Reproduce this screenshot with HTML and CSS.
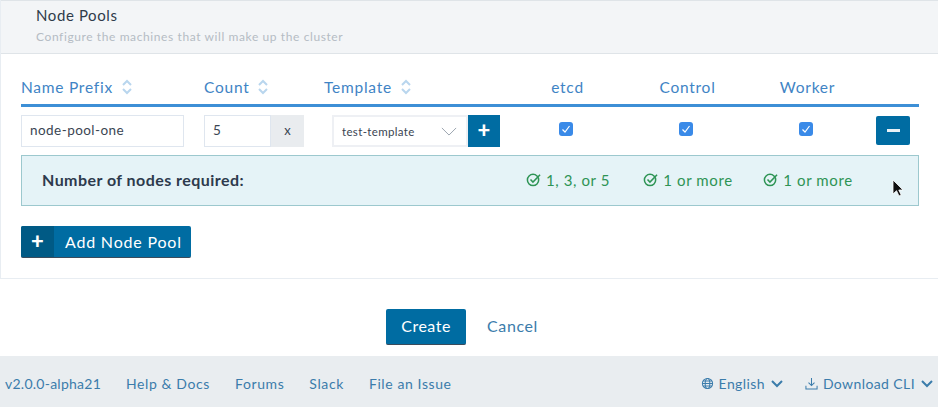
FILE: index.html
```html
<!DOCTYPE html>
<html lang="en">
<head>
    <meta charset="UTF-8">
    <meta name="viewport" content="width=device-width, initial-scale=1.0">
    <title>Node Pools</title>
    <link rel="stylesheet" href="styles.css">
</head>
<body>
    <div class="page">
        <section class="panel">
            <div class="panel-head">
                <h2>Node Pools</h2>
                <p>Configure the machines that will make up the cluster</p>
            </div>
            <div class="panel-body">
                <div class="pool-grid pool-header">
                    <div class="col-title">Name Prefix <svg class="sort" viewBox="0 0 12 16"><path d="M2 6l4-4 4 4M2 10l4 4 4-4"/></svg></div>
                    <div class="col-title">Count <svg class="sort" viewBox="0 0 12 16"><path d="M2 6l4-4 4 4M2 10l4 4 4-4"/></svg></div>
                    <div class="col-title">Template <svg class="sort" viewBox="0 0 12 16"><path d="M2 6l4-4 4 4M2 10l4 4 4-4"/></svg></div>
                    <div class="col-title center">etcd</div>
                    <div class="col-title center">Control</div>
                    <div class="col-title center">Worker</div>
                    <div></div>
                </div>

                <div class="pool-grid pool-row">
                    <div class="field name-field">node-pool-one</div>
                    <div class="count-group">
                        <div class="field count-field">5</div>
                        <div class="count-suffix">x</div>
                    </div>
                    <div class="template-group">
                        <div class="template-select">
                            <span>test-template</span>
                            <svg class="select-arrow" viewBox="0 0 18 10"><path d="M1 1l8 8 8-8"/></svg>
                        </div>
                        <div class="btn-square">+</div>
                    </div>
                    <div class="center check-cell"><span class="check"><svg viewBox="0 0 14 14"><path d="M3.5 7.5l2.5 2.5 4.5-6"/></svg></span></div>
                    <div class="center check-cell"><span class="check"><svg viewBox="0 0 14 14"><path d="M3.5 7.5l2.5 2.5 4.5-6"/></svg></span></div>
                    <div class="center check-cell"><span class="check"><svg viewBox="0 0 14 14"><path d="M3.5 7.5l2.5 2.5 4.5-6"/></svg></span></div>
                    <div class="remove-cell"><div class="btn-remove"><span></span></div></div>
                </div>

                <div class="pool-grid required">
                    <div class="required-label">Number of nodes required:</div>
                    <div class="center required-value"><svg class="ok" viewBox="0 0 16 16"><circle cx="7.5" cy="8.5" r="6"/><path d="M4.8 8l2.6 2.8L15 3"/></svg>1, 3, or 5</div>
                    <div class="center required-value"><svg class="ok" viewBox="0 0 16 16"><circle cx="7.5" cy="8.5" r="6"/><path d="M4.8 8l2.6 2.8L15 3"/></svg>1 or more</div>
                    <div class="center required-value"><svg class="ok" viewBox="0 0 16 16"><circle cx="7.5" cy="8.5" r="6"/><path d="M4.8 8l2.6 2.8L15 3"/></svg>1 or more</div>
                </div>

                <div class="btn-add">
                    <span class="btn-add-icon">+</span>
                    <span class="btn-add-text">Add Node Pool</span>
                </div>
            </div>
        </section>

        <div class="actions">
            <div class="btn-create">Create</div>
            <a class="link-cancel" href="#">Cancel</a>
        </div>

        <footer class="footer">
            <a class="footer-version" href="#">v2.0.0-alpha21</a>
            <a href="#">Help &amp; Docs</a>
            <a href="#">Forums</a>
            <a href="#">Slack</a>
            <a href="#">File an Issue</a>
            <div class="footer-right">
                <a href="#"><svg class="foot-icon" viewBox="0 0 14 14"><circle cx="7" cy="7" r="5.5"/><ellipse cx="7" cy="7" rx="2.5" ry="5.5"/><path d="M1.5 7h11M2.4 4.2h9.2M2.4 9.8h9.2"/></svg>English <svg class="chev" viewBox="0 0 14 9"><path d="M2 2l5 5 5-5"/></svg></a>
                <a href="#"><svg class="foot-icon" viewBox="0 0 14 14"><path d="M7 1v8M3.8 6L7 9.2 10.2 6M1 9.5V13h12V9.5"/></svg>Download CLI <svg class="chev" viewBox="0 0 14 9"><path d="M2 2l5 5 5-5"/></svg></a>
            </div>
        </footer>

        <svg class="cursor" viewBox="0 0 12 19"><path d="M1 1v14l3.5-3.3L7 17l2.2-1-2.4-5H11z"/></svg>
    </div>
</body>
</html>
```

FILE: styles.css
```css
* {
    box-sizing: border-box;
}

body {
    font-family: "Lato", "Open Sans", sans-serif;
    margin: 0;
    padding: 0;
    background-color: #fff;
    color: #3d4a5c;
}

a {
    text-decoration: none;
}

.page {
    position: relative;
    width: 938px;
    height: 407px;
    overflow: hidden;
    display: flex;
    flex-direction: column;
}

.panel {
    height: 279px;
    border-left: 1px solid #e8edf2;
    border-bottom: 1px solid #e8edf2;
}

.panel-head {
    height: 54px;
    padding: 6px 0 0 35px;
    background-color: #f3f5f7;
    border-top: 1px solid #dfe4e8;
    border-bottom: 1px solid #dfe4e8;
}

.panel-head h2 {
    margin: 0;
    font-size: 15px;
    line-height: 16px;
    font-weight: 400;
    letter-spacing: 0.6px;
    color: #2f3b4a;
}

.panel-head p {
    margin: 6px 0 0;
    font-size: 12px;
    line-height: 15px;
    letter-spacing: 0.6px;
    color: #b5bcc4;
}

.panel-body {
    padding: 0 19px 0 20px;
}

.pool-grid {
    display: grid;
    grid-template-columns: 183px 120px 182px 120px 120px 120px 52px;
    align-items: center;
}

.pool-header {
    height: 53px;
    padding-top: 22px;
    align-items: start;
    border-bottom: 3px solid #3d8fd6;
}

.col-title {
    display: flex;
    align-items: center;
    gap: 8px;
    font-size: 15.5px;
    line-height: 22px;
    letter-spacing: 0.75px;
    color: #3f84c5;
}

.col-title.center {
    justify-content: center;
    padding-left: 3px;
}

.center {
    display: flex;
    justify-content: center;
    align-items: center;
}

.sort {
    width: 12px;
    height: 16px;
    fill: none;
    stroke: #b9d6ee;
    stroke-width: 2;
}

.pool-row {
    margin-top: 8px;
    height: 32px;
    align-items: start;
}

.field {
    height: 32px;
    padding-left: 8px;
    border: 1px solid #dfe6ef;
    font-size: 13.5px;
    line-height: 29px;
    letter-spacing: 0.45px;
    color: #3a4552;
    background-color: #fff;
}

.name-field {
    width: 163px;
}

.count-group {
    display: flex;
    width: 100px;
}

.count-field {
    width: 67px;
}

.count-suffix {
    width: 33px;
    height: 32px;
    background-color: #e9ecef;
    text-align: center;
    font-size: 13px;
    line-height: 31px;
    color: #3a4552;
}

.template-group {
    display: flex;
    height: 32px;
    margin-left: 8px;
}

.template-select {
    display: flex;
    align-items: center;
    justify-content: space-between;
    width: 136px;
    height: 32px;
    padding: 0 9px 0 8px;
    border: 2px solid #eef0f4;
    font-size: 11.5px;
    letter-spacing: 0.35px;
    color: #3a4552;
}

.select-arrow {
    width: 16px;
    height: 9px;
    fill: none;
    stroke: #9aa3ad;
    stroke-width: 1.1;
}

.btn-square {
    width: 32px;
    height: 32px;
    background-color: #006ca2;
    color: #fff;
    text-align: center;
    font-size: 22px;
    font-weight: 900;
    line-height: 29px;
}

.check-cell {
    padding-top: 7px;
}

.check {
    display: block;
    width: 14px;
    height: 14px;
    border-radius: 3px;
    background-color: #3a8ae8;
}

.check svg {
    display: block;
    fill: none;
    stroke: #fff;
    stroke-width: 1.2;
}

.remove-cell {
    display: flex;
    justify-content: flex-start;
    padding-left: 10px;
}

.btn-remove {
    display: flex;
    align-items: center;
    justify-content: center;
    width: 34px;
    height: 29px;
    margin-top: 1px;
    border-radius: 2px;
    background-color: #006ca2;
}

.btn-remove span {
    display: block;
    width: 13px;
    height: 3px;
    background-color: #e8f1f6;
}

.required {
    height: 51px;
    margin-top: 8px;
    padding-bottom: 2px;
    width: 898px;
    background-color: #e5f3f7;
    border: 1px solid #9cc8ce;
    margin-left: 0;
    grid-template-columns: 484px 120px 120px 120px;
}

.required-label {
    padding-left: 20px;
    font-size: 16px;
    font-weight: 700;
    letter-spacing: 0.45px;
    color: #2d3a4d;
}

.required-value {
    gap: 5px;
    padding-left: 4px;
    font-size: 15px;
    letter-spacing: 0.6px;
    color: #2e9455;
}

.ok {
    width: 15px;
    height: 15px;
    fill: none;
    stroke: #2e9455;
    stroke-width: 1.6;
}

.btn-add {
    display: flex;
    width: 170px;
    height: 32px;
    margin-top: 20px;
    border-radius: 2px;
    background-color: #006ca2;
    border-bottom: 1px solid #3b4b5b;
    color: #fff;
    overflow: hidden;
}

.btn-add-icon {
    width: 33px;
    background-color: #005a85;
    text-align: center;
    font-size: 22px;
    font-weight: 900;
    line-height: 30px;
}

.btn-add-text {
    padding-left: 11px;
    font-size: 16px;
    line-height: 31px;
    letter-spacing: 0.8px;
}

.actions {
    display: flex;
    justify-content: center;
    align-items: flex-start;
    gap: 21px;
    height: 77px;
    padding: 30px 14px 0 0;
}

.btn-create {
    width: 80px;
    height: 36px;
    border-radius: 2px;
    background-color: #006ca2;
    border-bottom: 1px solid #3b4b5b;
    color: #fff;
    text-align: center;
    font-size: 16px;
    line-height: 34px;
    letter-spacing: 0.5px;
}

.link-cancel {
    font-size: 16px;
    line-height: 34px;
    letter-spacing: 0.6px;
    color: #3b7cab;
}

.footer {
    display: flex;
    align-items: center;
    gap: 25px;
    height: 51px;
    padding: 4px 4px 0 5px;
    background-color: #e9edf0;
    font-size: 14px;
    letter-spacing: 0.6px;
}

.footer a {
    color: #3b7cab;
}

.footer .footer-version {
    letter-spacing: 0.25px;
}

.footer-right {
    display: flex;
    gap: 21px;
    margin-left: auto;
    letter-spacing: 0.4px;
}

.footer-right a {
    display: flex;
    align-items: center;
    gap: 5px;
}

.foot-icon {
    width: 13px;
    height: 13px;
    fill: none;
    stroke: #3b7cab;
    stroke-width: 1.1;
}

.chev {
    width: 14px;
    height: 9px;
    fill: none;
    stroke: #3b7cab;
    stroke-width: 2;
}

.cursor {
    position: absolute;
    left: 892px;
    top: 179px;
    width: 12px;
    height: 19px;
    fill: #111;
    stroke: #fff;
    stroke-width: 0.8;
}
```
